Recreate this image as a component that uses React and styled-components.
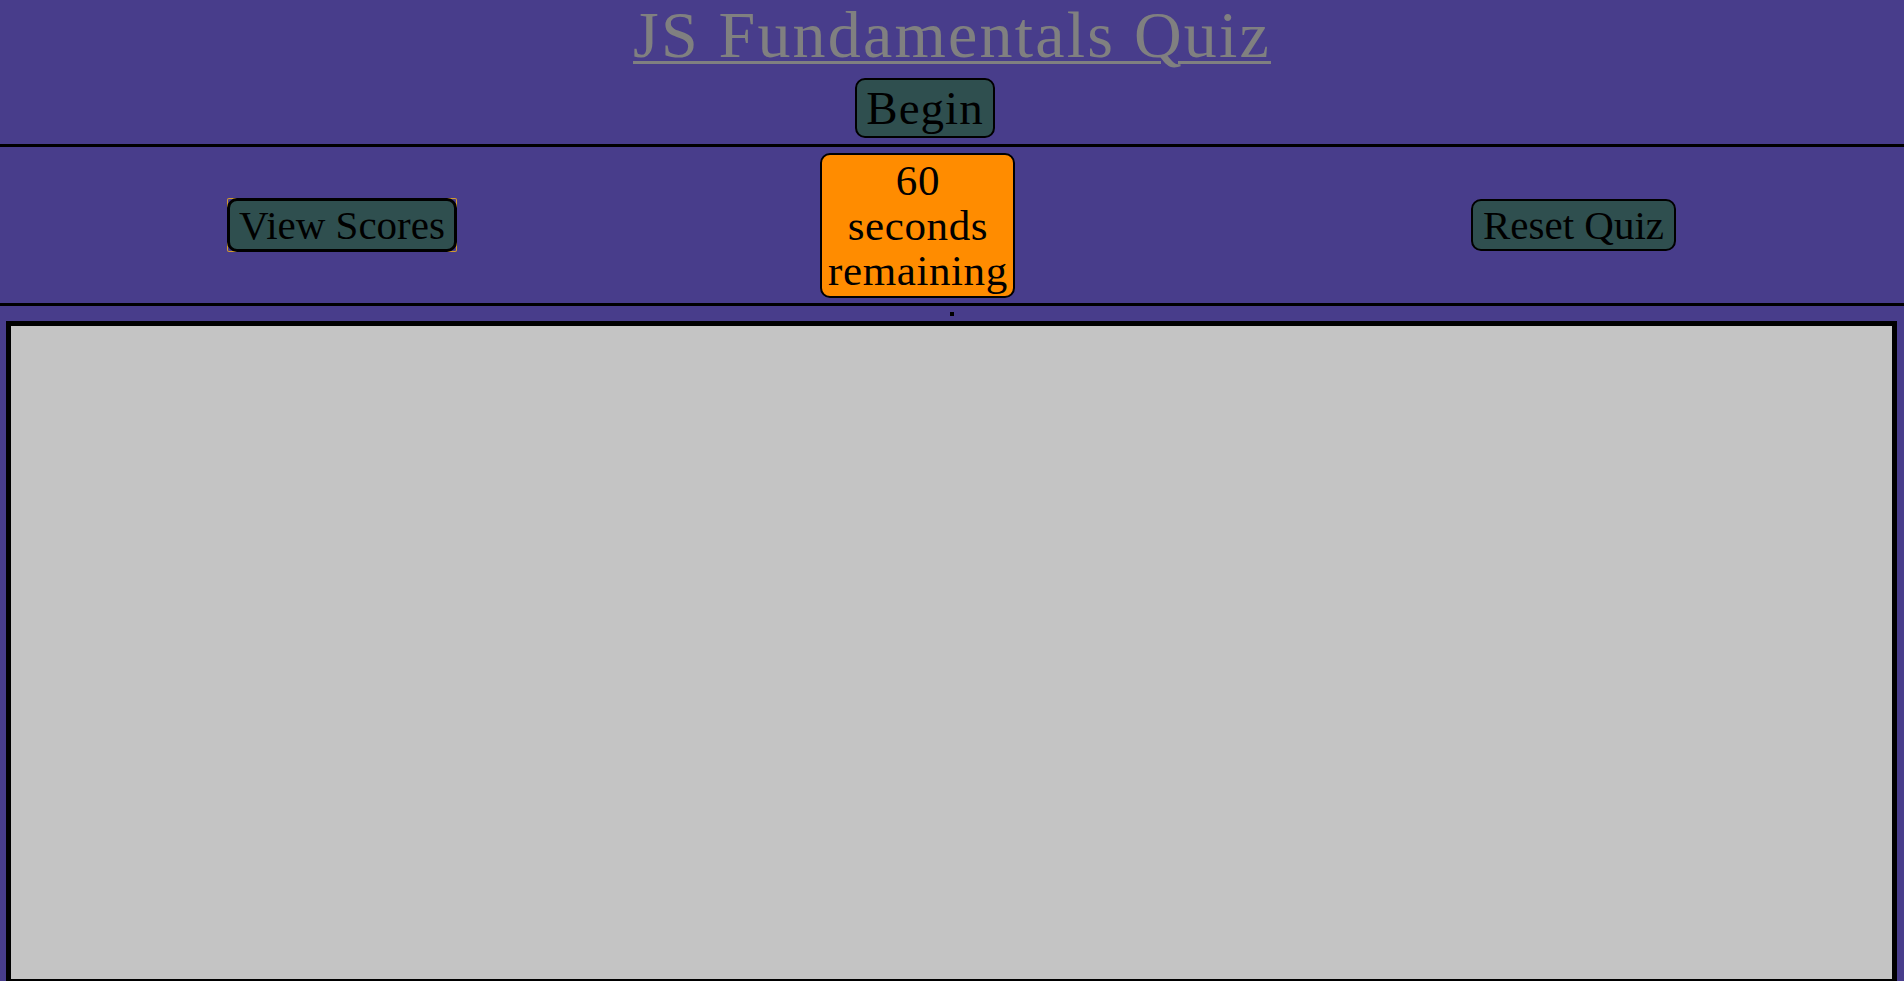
import React from "react";
import styled, { createGlobalStyle } from "styled-components";

const GlobalStyle = createGlobalStyle`
  html, body {
    margin: 0;
    padding: 0;
    background: #483d8b;
  }

  body {
    font-family: "Liberation Serif", "DejaVu Serif", serif;
    color: black;
  }
`;

const Header = styled.header`
  text-align: center;
  padding-top: 2px;
  padding-bottom: 6px;
  border-bottom: 3px solid black;
`;

const Title = styled.h1`
  margin: 0;
  font-size: 66px;
  font-weight: normal;
  line-height: 66px;
  letter-spacing: 2.2px;

  a {
    color: gray;
    text-decoration: underline;
    text-decoration-thickness: 3px;
    text-underline-offset: 4px;
  }
`;

const Button = styled.button`
  font-family: inherit;
  color: black;
  background: darkslategray;
  border: ${(p) => p.$border || 2}px solid black;
  border-radius: 10px;
  cursor: pointer;
`;

const BeginButton = styled(Button)`
  margin: 10px 0 0 -54px;
  font-size: 47px;
  line-height: 52px;
  padding: 2px 9px;
  letter-spacing: 1px;
`;

const Controls = styled.section`
  display: flex;
  align-items: center;
  justify-content: space-between;
  height: 156px;
  padding: 0 228px 0 227px;
  border-bottom: 3px solid black;
`;

const GoldCorners = styled.span`
  display: inline-flex;
  border-radius: 2px;
  box-shadow: inset 0 0 0 1px #d19a2e;
`;

const ControlButton = styled(Button)`
  font-size: 41px;
  line-height: 48px;
  padding: 0 ${(p) => p.$pad}px;
`;

const Timer = styled.div`
  width: 195px;
  margin-right: 92px;
  padding: 3px 0;
  box-sizing: border-box;
  background: darkorange;
  border: 2px solid black;
  border-radius: 10px;
  text-align: center;
  font-size: 43px;
  line-height: 45px;
  letter-spacing: 0.6px;
`;

const Dot = styled.div`
  width: 4px;
  height: 4px;
  margin: 6px auto 5px;
  background: black;
`;

const QuizPanel = styled.main`
  height: 653px;
  margin: 0 7px 0 6px;
  background: #c4c4c4;
  border: 5px solid black;
`;

export default function App() {
  return (
    <>
      <GlobalStyle />
      <Header>
        <Title>
          <a href="#quiz">JS Fundamentals Quiz</a>
        </Title>
        <BeginButton>Begin</BeginButton>
      </Header>
      <Controls>
        <GoldCorners>
          <ControlButton $border={3} $pad={9}>
            View Scores
          </ControlButton>
        </GoldCorners>
        <Timer>
          60
          <br />
          seconds
          <br />
          remaining
        </Timer>
        <ControlButton $pad={10}>Reset Quiz</ControlButton>
      </Controls>
      <Dot />
      <QuizPanel id="quiz" />
    </>
  );
}
